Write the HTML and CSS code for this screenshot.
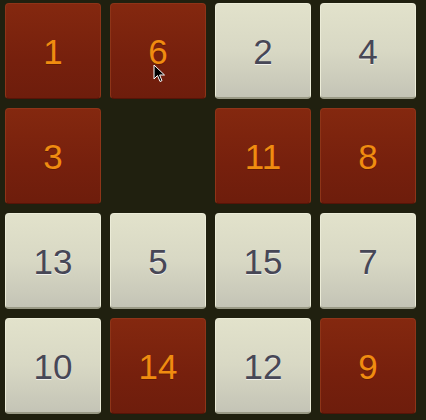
FILE: index.html
```html
<!DOCTYPE html>
<html>
<head>
<meta charset="utf-8">
<link rel="stylesheet" href="styles.css">
</head>
<body>
<div class="board">
  <div class="tile red">1</div>
  <div class="tile red">6</div>
  <div class="tile light">2</div>
  <div class="tile light">4</div>
  <div class="tile red">3</div>
  <div class="tile empty"></div>
  <div class="tile red">11</div>
  <div class="tile red">8</div>
  <div class="tile light">13</div>
  <div class="tile light">5</div>
  <div class="tile light">15</div>
  <div class="tile light">7</div>
  <div class="tile light">10</div>
  <div class="tile red">14</div>
  <div class="tile light">12</div>
  <div class="tile red">9</div>
</div>
<svg class="cursor" width="14" height="20" viewBox="0 0 14 20"><path d="M1 1 L1 15 L4.5 11.5 L7 17.5 L9 16.6 L6.6 11 L11.5 11 Z" fill="#000" stroke="#fff" stroke-width="1"/></svg>
</body>
</html>
```
FILE: styles.css
```css
html, body {
  margin: 0;
  padding: 0;
  background: #20200f;
  width: 426px;
  height: 420px;
  overflow: hidden;
}
.board {
  display: grid;
  grid-template-columns: repeat(4, 96px);
  grid-auto-rows: 96px;
  gap: 9px;
  padding: 3px 10px 6px 5px;
}
.tile {
  box-sizing: border-box;
  border-radius: 4px;
  display: flex;
  align-items: center;
  justify-content: center;
  font-family: "Liberation Sans", Arial, sans-serif;
  font-size: 35px;
  line-height: 1;
  padding-top: 1px;
}
.red {
  background: linear-gradient(#84280f, #76200d 60%, #6e1d0c);
  color: #f08c10;
  border: 1px solid #8e3418;
  border-bottom-color: #561408;
  text-shadow: 0 1px 0 rgba(80,20,0,0.5);
}
.light {
  background: linear-gradient(#e2e2cb 0%, #d8d8c4 50%, #c4c4b6 100%);
  color: #474756;
  border: 1px solid #ececd8;
  border-bottom: 2px solid #9a9a86;
  text-shadow: 0 1px 0 rgba(255,255,255,0.7);
}
.empty {
  background: transparent;
}
.cursor {
  position: absolute;
  left: 153px;
  top: 64px;
}
```
